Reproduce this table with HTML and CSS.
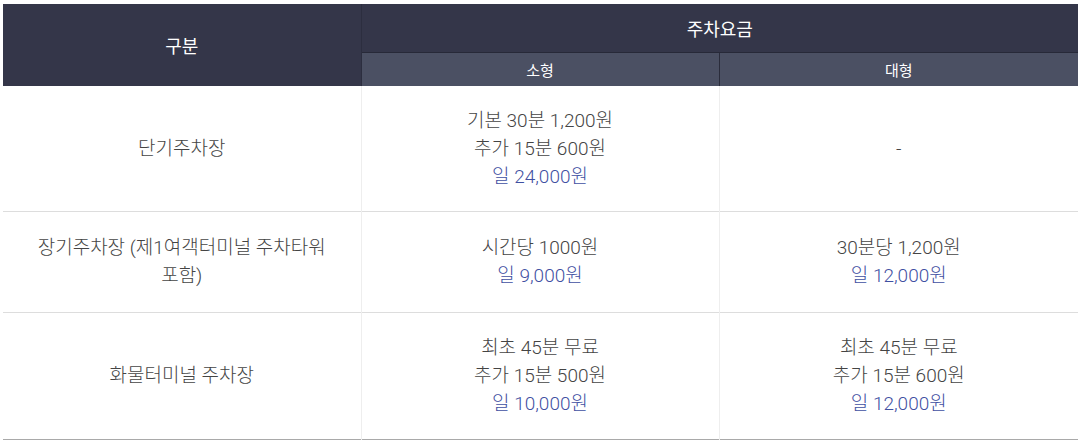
FILE: index.html
```html
<!DOCTYPE html>
<html lang="ko">
<head>
<meta charset="utf-8">
<link rel="stylesheet" href="styles.css">
</head>
<body>
<table class="fee-table">
  <colgroup>
    <col class="c1"><col class="c2"><col class="c3">
  </colgroup>
  <thead>
    <tr>
      <th rowspan="2" class="h-main h-left">구분</th>
      <th colspan="2" class="h-main">주차요금</th>
    </tr>
    <tr>
      <th class="h-sub">소형</th>
      <th class="h-sub">대형</th>
    </tr>
  </thead>
  <tbody>
    <tr class="r1">
      <td>단기주차장</td>
      <td>기본 30분 1,200원<br>추가 15분 600원<br><span class="day">일 24,000원</span></td>
      <td>-</td>
    </tr>
    <tr class="r2">
      <td>장기주차장 (제1여객터미널 주차타워 포함)</td>
      <td>시간당 1000원<br><span class="day">일 9,000원</span></td>
      <td>30분당 1,200원<br><span class="day">일 12,000원</span></td>
    </tr>
    <tr class="r3">
      <td>화물터미널 주차장</td>
      <td>최초 45분 무료<br>추가 15분 500원<br><span class="day">일 10,000원</span></td>
      <td>최초 45분 무료<br>추가 15분 600원<br><span class="day">일 12,000원</span></td>
    </tr>
  </tbody>
</table>
</body>
</html>
```
FILE: styles.css
```css
html, body {
  margin: 0;
  padding: 0;
  background: #ffffff;
}
body {
  padding: 4px 5px 0 3px;
  font-family: Roboto, "Noto Sans CJK KR", sans-serif;
}
.fee-table {
  width: 1075px;
  border-collapse: collapse;
  table-layout: fixed;
  border-bottom: 1px solid #a9a9a9;
}
.c1 { width: 358px; }
.c2 { width: 358px; }
.c3 { width: 359px; }
.fee-table th {
  color: #ffffff;
  font-weight: 400;
  text-align: center;
  padding: 0;
}
.h-main {
  background: #343649;
  height: 48px;
  font-size: 18px;
  border-bottom: 1px solid #272938;
}
.h-left {
  border-right: 1px solid #2c2e3f;
  border-bottom: none;
}
.h-sub {
  background: #4b5063;
  height: 33px;
  font-size: 15px;
  font-weight: 500;
}
.h-sub + .h-sub {
  border-left: 1px solid #2a2c3b;
}
.fee-table td {
  text-align: center;
  vertical-align: middle;
  font-size: 19px;
  font-weight: 300;
  line-height: 28px;
  color: #444444;
  padding: 20px 30px;
  word-break: keep-all;
  border-left: 1px solid #eeeeee;
  border-top: 1px solid #dddddd;
}
.fee-table td:first-child {
  border-left: none;
}
.fee-table tbody tr:first-child td {
  border-top: none;
}
.r1 td { height: 85px; }
.r2 td { height: 60px; }
.r3 td { height: 86px; }
.day {
  color: #3f50a2;
}
```
